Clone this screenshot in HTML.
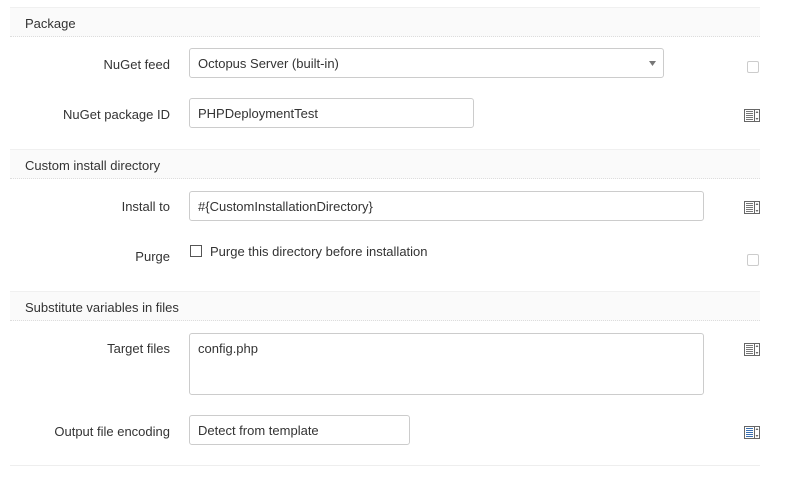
<!DOCTYPE html>
<html><head><style>
body{margin:0;width:792px;height:485px;background:#fff;font-family:"Liberation Sans",sans-serif;font-size:13px;color:#333;position:relative;overflow:hidden}
.a{position:absolute}
.hd{position:absolute;left:10px;width:750px;height:30px;background:#fafafa;border-top:1px solid #f0f0f0;border-bottom:1px dotted #ddd;box-sizing:border-box}
.hd span{position:absolute;left:15px;top:8px}
.lb{position:absolute;right:622px;text-align:right;white-space:nowrap}
.in{position:absolute;left:189px;height:30px;border:1px solid #ccc;border-radius:3px;box-sizing:border-box;padding:7px 8px;background:#fff}
.cb{position:absolute;width:12px;height:12px;border:1px solid #ccc;border-radius:2px;box-sizing:border-box}
.ic{position:absolute;left:744px}
</style></head><body>
<div class="hd" style="top:7px"><span>Package</span></div>
<div class="lb" style="top:57px">NuGet feed</div>
<div class="in" style="top:48px;width:475px">Octopus Server (built-in)<svg class="a" style="right:7px;top:12px" width="7" height="5"><path d="M0 0h7L3.5 5z" fill="#777"/></svg></div>
<div class="cb" style="left:747px;top:61px"></div>
<div class="lb" style="top:107px">NuGet package ID</div>
<div class="in" style="top:98px;width:285px">PHPDeploymentTest</div>
<svg class="ic" style="top:109px" width="16" height="13"><rect x=".5" y=".5" width="15" height="12" fill="#fff" stroke="#666"/><line x1="10.5" y1="0" x2="10.5" y2="13" stroke="#666"/><g stroke="#777"><line x1="2" y1="2.5" x2="9" y2="2.5"/><line x1="2" y1="4.5" x2="9" y2="4.5"/><line x1="2" y1="6.5" x2="9" y2="6.5"/><line x1="2" y1="8.5" x2="9" y2="8.5"/><line x1="2" y1="10.5" x2="9" y2="10.5"/></g><path d="M13 2l-1.5 2h3zM13 11l-1.5-2h3z" fill="#666"/></svg>
<div class="hd" style="top:149px"><span>Custom install directory</span></div>
<div class="lb" style="top:199px">Install to</div>
<div class="in" style="top:191px;width:515px">#{CustomInstallationDirectory}</div>
<svg class="ic" style="top:201px" width="16" height="13"><rect x=".5" y=".5" width="15" height="12" fill="#fff" stroke="#666"/><line x1="10.5" y1="0" x2="10.5" y2="13" stroke="#666"/><g stroke="#777"><line x1="2" y1="2.5" x2="9" y2="2.5"/><line x1="2" y1="4.5" x2="9" y2="4.5"/><line x1="2" y1="6.5" x2="9" y2="6.5"/><line x1="2" y1="8.5" x2="9" y2="8.5"/><line x1="2" y1="10.5" x2="9" y2="10.5"/></g><path d="M13 2l-1.5 2h3zM13 11l-1.5-2h3z" fill="#666"/></svg>
<div class="lb" style="top:249px">Purge</div>
<div class="cb" style="left:190px;top:245px;border-color:#555;border-radius:0"></div>
<div class="a" style="left:210px;top:244px">Purge this directory before installation</div>
<div class="cb" style="left:747px;top:254px"></div>
<div class="hd" style="top:291px"><span>Substitute variables in files</span></div>
<div class="lb" style="top:341px">Target files</div>
<div class="in" style="top:333px;width:515px;height:62px">config.php</div>
<svg class="ic" style="top:343px" width="16" height="13"><rect x=".5" y=".5" width="15" height="12" fill="#fff" stroke="#666"/><line x1="10.5" y1="0" x2="10.5" y2="13" stroke="#666"/><g stroke="#777"><line x1="2" y1="2.5" x2="9" y2="2.5"/><line x1="2" y1="4.5" x2="9" y2="4.5"/><line x1="2" y1="6.5" x2="9" y2="6.5"/><line x1="2" y1="8.5" x2="9" y2="8.5"/><line x1="2" y1="10.5" x2="9" y2="10.5"/></g><path d="M13 2l-1.5 2h3zM13 11l-1.5-2h3z" fill="#666"/></svg>
<div class="lb" style="top:424px">Output file encoding</div>
<div class="in" style="top:415px;width:221px">Detect from template</div>
<svg class="ic" style="top:426px" width="16" height="13"><rect x=".5" y=".5" width="15" height="12" fill="#fff" stroke="#666"/><line x1="10.5" y1="0" x2="10.5" y2="13" stroke="#666"/><g stroke="#3a6fb0"><line x1="2" y1="2.5" x2="9" y2="2.5"/><line x1="2" y1="4.5" x2="9" y2="4.5"/><line x1="2" y1="6.5" x2="9" y2="6.5"/><line x1="2" y1="8.5" x2="9" y2="8.5"/><line x1="2" y1="10.5" x2="9" y2="10.5"/></g><path d="M13 2l-1.5 2h3zM13 11l-1.5-2h3z" fill="#666"/></svg>
<div class="a" style="left:10px;top:465px;width:750px;height:1px;background:#eee"></div>
</body></html>
